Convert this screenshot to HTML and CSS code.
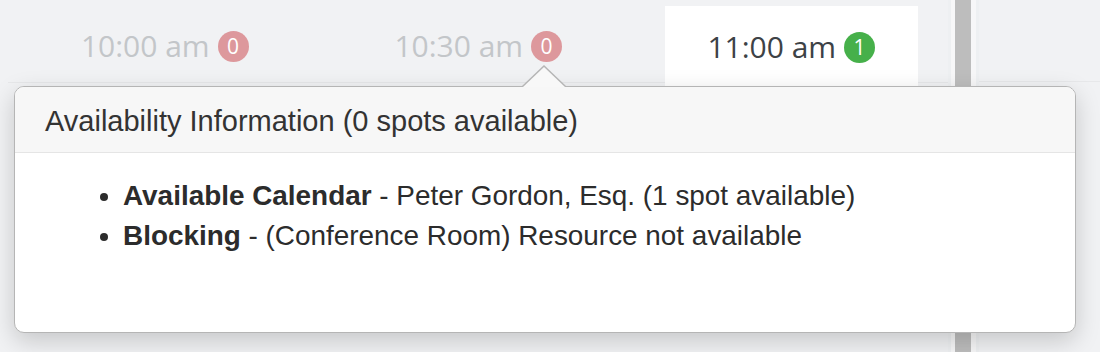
FILE: index.html
```html
<!DOCTYPE html>
<html>
<head>
<meta charset="utf-8">
<link rel="stylesheet" href="styles.css">
</head>
<body>
<div class="page">
  <div class="slots">
    <div class="slot">
      <span class="time">10:00 am</span><span class="badge badge-none">0</span>
    </div>
    <div class="slot">
      <span class="time">10:30 am</span><span class="badge badge-none">0</span>
    </div>
    <div class="slot slot-active">
      <span class="time">11:00 am</span><span class="badge badge-ok">1</span>
    </div>
  </div>
  <div class="scrollbar"><div class="thumb"></div></div>
  <div class="rest"></div>

  <div class="popover">
    <div class="popover-head">Availability Information (0 spots available)</div>
    <div class="popover-body">
      <ul class="info-list">
        <li><b>Available Calendar</b> - Peter Gordon, Esq. (1 spot available)</li>
        <li><b>Blocking</b> - (Conference Room) Resource not available</li>
      </ul>
    </div>
  </div>
</div>
</body>
</html>
```
FILE: styles.css
```css
html, body {
  margin: 0;
  padding: 0;
  background: #f1f2f4;
}

.page {
  position: relative;
  display: flex;
  width: 1100px;
  height: 352px;
  overflow: hidden;
}

.slots {
  display: grid;
  grid-template-columns: repeat(3, 313.5px);
  margin-left: 8px;
  height: 82px;
  border-bottom: 1px solid #e7e8ea;
}

.slot {
  display: flex;
  align-items: center;
  justify-content: center;
  padding-top: 10px;
  height: 82px;
  box-sizing: border-box;
}

.slot-active {
  background: #ffffff;
  margin: 6px 31px 0 30px;
  padding-top: 0;
  padding-bottom: 8px;
  height: 90px;
}

.time {
  font-family: "Open Sans", "Noto Sans", sans-serif;
  font-size: 30px;
  color: #c3c6c9;
  line-height: 1;
}

.slot-active .time {
  color: #3d4246;
}

.badge {
  display: inline-flex;
  align-items: center;
  justify-content: center;
  width: 31px;
  height: 31px;
  border-radius: 50%;
  margin-left: 8px;
  font-family: "Open Sans", "Noto Sans", sans-serif;
  font-size: 21px;
  color: #ffffff;
  line-height: 1;
}

.badge-none {
  background: #dd989c;
}

.badge-ok {
  background: #46b04a;
}

.scrollbar {
  width: 31px;
  margin-left: -1px;
  display: flex;
  justify-content: center;
  background: linear-gradient(to right, #eef0f2 0 3px, #f7f7f8 3px 28px, #eef0f2 28px);
}

.thumb {
  width: 16px;
  background: #bdbdbd;
}

.rest {
  flex: 1;
  border-bottom: 1px solid #e7e8ea;
  height: 81px;
}

.popover {
  position: absolute;
  left: 14px;
  top: 86px;
  width: 1062px;
  height: 247px;
  box-sizing: border-box;
  background: #ffffff;
  border: 1px solid #b5b5b5;
  border-radius: 10px;
  box-shadow: 0 8px 24px rgba(0, 0, 0, 0.18);
  font-family: "Liberation Sans", Arial, sans-serif;
  color: #2c2c2c;
}

.popover::before,
.popover::after {
  content: "";
  position: absolute;
  width: 0;
  height: 0;
  border-style: solid;
  border-color: transparent;
}

.popover::before {
  left: 507px;
  top: -22px;
  border-width: 0 22px 21px 22px;
  border-bottom-color: #b5b5b5;
}

.popover::after {
  left: 508px;
  top: -20px;
  border-width: 0 21px 20px 21px;
  border-bottom-color: #f8f8f8;
}

.popover-head {
  height: 66px;
  box-sizing: border-box;
  display: flex;
  align-items: center;
  padding-left: 30px;
  padding-top: 3px;
  background: #f7f7f7;
  border-bottom: 1px solid #e5e5e5;
  border-radius: 9px 9px 0 0;
  font-size: 29px;
  color: #333333;
}

.popover-body {
  padding: 23px 30px 0 30px;
}

.info-list {
  margin: 0;
  padding-left: 78px;
  font-size: 27.9px;
  line-height: 40px;
}
```
